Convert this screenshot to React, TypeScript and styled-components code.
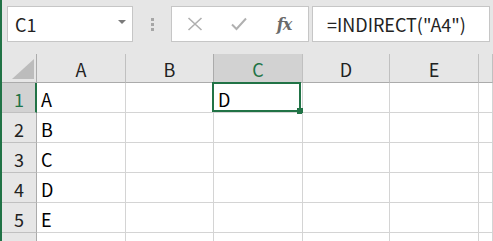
import React from "react";
import styled, { createGlobalStyle, css } from "styled-components";

const GREEN = "#217346";
const FONT = `"Noto Sans CJK JP", "Noto Sans", sans-serif`;

const Global = createGlobalStyle`
  html, body { margin: 0; padding: 0; background: #e6e6e6; }
  body { font-family: ${FONT}; }
`;

const Root = styled.div`
  width: 493px;
  height: 241px;
  box-sizing: border-box;
  border-left: 2px solid ${GREEN};
  background: #e6e6e6;
  display: flex;
  flex-direction: column;
  overflow: hidden;
`;

const FormulaBar = styled.div`
  display: flex;
  align-items: center;
  height: 36px;
  margin-top: 6px;
  padding-left: 5px;
  padding-right: 3px;
`;

const NameBox = styled.div`
  box-sizing: border-box;
  width: 126px;
  height: 36px;
  background: #fff;
  border: 1px solid #c6c6c6;
  display: flex;
  align-items: center;
  justify-content: space-between;
  padding: 0 6px 0 7px;
  font-size: 18px;
  color: #222;
  line-height: 1;
`;

const Arrow = styled.span`
  width: 0;
  height: 0;
  border-left: 4px solid transparent;
  border-right: 4px solid transparent;
  border-top: 4px solid #7a7a7a;
  margin-top: -4px;
`;

const Grip = styled.div`
  margin-left: 18px;
  width: 3px;
  display: flex;
  flex-direction: column;
  gap: 2px;
  span {
    width: 3px;
    height: 3px;
    background: #a6a6a6;
  }
`;

const ButtonsBox = styled.div`
  box-sizing: border-box;
  margin-left: 17px;
  width: 138px;
  height: 36px;
  background: #fff;
  border: 1px solid #c6c6c6;
  display: flex;
  align-items: center;
  padding-left: 14px;
`;

const IconSlot = styled.div<{ $w: number }>`
  width: ${(p) => p.$w}px;
  display: flex;
  align-items: center;
  justify-content: center;
`;

const Fx = styled.span`
  font-family: "DejaVu Serif", "Liberation Serif", serif;
  font-style: italic;
  font-weight: bold;
  font-size: 16px;
  color: #6a6a6a;
  letter-spacing: -1px;
`;

const FormulaInput = styled.div`
  box-sizing: border-box;
  margin-left: 3px;
  flex: 1;
  height: 36px;
  background: #fff;
  border: 1px solid #c6c6c6;
  display: flex;
  align-items: center;
  padding-left: 14px;
  font-size: 18px;
  color: #222;
  white-space: nowrap;
  overflow: hidden;
`;

const Sheet = styled.div`
  margin-top: 12px;
  display: grid;
  grid-template-columns: 35px 89px 88px 89px 87px 89px 1fr;
  grid-template-rows: 29px repeat(6, 30px);
  background: #fff;
`;

const Corner = styled.div`
  box-sizing: border-box;
  background: #e6e6e6;
  border-right: 1px solid #ababab;
  border-bottom: 1px solid #ababab;
  position: relative;
  display: flex;
  align-items: flex-end;
  justify-content: flex-end;
  padding: 0 2px 3px 0;
`;

const ColHead = styled.div<{ $active?: boolean }>`
  box-sizing: border-box;
  background: ${(p) => (p.$active ? "#d2d2d2" : "#e6e6e6")};
  color: ${(p) => (p.$active ? GREEN : "#222")};
  border-right: 1px solid #c0c0c0;
  border-bottom: 1px solid #ababab;
  ${(p) =>
    p.$active &&
    css`
      border-left: 1px solid #ababab;
      margin-left: -1px;
    `}
  display: flex;
  align-items: center;
  justify-content: center;
  font-size: 18px;
  line-height: 1;
  padding-top: 2px;
`;

const RowHead = styled.div<{ $active?: boolean }>`
  box-sizing: border-box;
  background: ${(p) => (p.$active ? "#d2d2d2" : "#e6e6e6")};
  color: ${(p) => (p.$active ? GREEN : "#222")};
  border-right: ${(p) => (p.$active ? `2px solid ${GREEN}` : "1px solid #ababab")};
  border-bottom: 1px solid #c0c0c0;
  display: flex;
  align-items: center;
  justify-content: center;
  font-size: 18px;
  line-height: 1;
  padding-top: 2px;
  padding-left: ${(p) => (p.$active ? "1px" : "0")};
`;

const Cell = styled.div`
  box-sizing: border-box;
  position: relative;
  border-right: 1px solid #d4d4d4;
  border-bottom: 1px solid #d4d4d4;
  display: flex;
  align-items: center;
  padding-left: 4px;
  padding-top: 3px;
  font-size: 18px;
  line-height: 1;
  color: #000;
`;

const Selection = styled.div`
  position: absolute;
  top: -1px;
  left: -2px;
  right: 1px;
  bottom: 0;
  border: 2px solid ${GREEN};
  pointer-events: none;
`;

const FillHandle = styled.div`
  position: absolute;
  right: -4px;
  bottom: -4px;
  width: 6px;
  height: 6px;
  background: ${GREEN};
`;

const cols = ["A", "B", "C", "D", "E", ""];
const data: Record<string, string> = {
  A1: "A",
  A2: "B",
  A3: "C",
  A4: "D",
  A5: "E",
  C1: "D",
};

export default function App() {
  return (
    <>
      <Global />
      <Root>
        <FormulaBar>
          <NameBox>
            <span>C1</span>
            <Arrow />
          </NameBox>
          <Grip>
            <span />
            <span />
            <span />
          </Grip>
          <ButtonsBox>
            <IconSlot $w={18}>
              <svg width="16" height="14" viewBox="0 0 16 14">
                <path d="M1.5 1 L14.5 13 M14.5 1 L1.5 13" stroke="#b0b0b0" strokeWidth="1.6" fill="none" />
              </svg>
            </IconSlot>
            <IconSlot $w={70}>
              <svg width="16" height="14" viewBox="0 0 16 14">
                <path d="M1 7.5 L5.5 12 L15 1.5" stroke="#b0b0b0" strokeWidth="2" fill="none" />
              </svg>
            </IconSlot>
            <IconSlot $w={20}>
              <Fx>fx</Fx>
            </IconSlot>
          </ButtonsBox>
          <FormulaInput>=INDIRECT("A4")</FormulaInput>
        </FormulaBar>
        <Sheet>
          <Corner>
            <svg width="22" height="20" viewBox="0 0 22 20">
              <path d="M22 0 L22 20 L0 20 Z" fill="#bcbcbc" />
            </svg>
          </Corner>
          {cols.map((c, i) => (
            <ColHead key={"h" + i} $active={c === "C"}>
              {c}
            </ColHead>
          ))}
          {[1, 2, 3, 4, 5, 6].map((r) => (
            <React.Fragment key={r}>
              <RowHead $active={r === 1}>{r <= 5 ? r : ""}</RowHead>
              {cols.map((c, i) => {
                const key = c + r;
                const sel = key === "C1";
                return (
                  <Cell key={i}>
                    {data[key] || ""}
                    {sel && (
                      <Selection>
                        <FillHandle />
                      </Selection>
                    )}
                  </Cell>
                );
              })}
            </React.Fragment>
          ))}
        </Sheet>
      </Root>
    </>
  );
}
